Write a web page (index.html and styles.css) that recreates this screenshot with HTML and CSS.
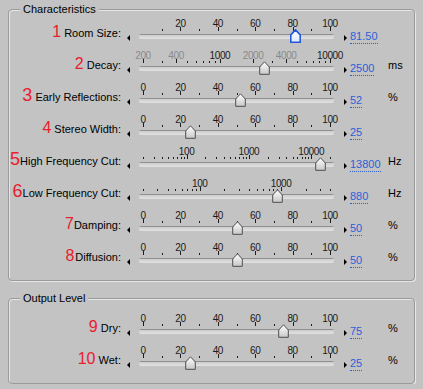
FILE: index.html
```html
<!DOCTYPE html>
<html lang="en">
<head>
    <meta charset="UTF-8">
    <title>Reverb</title>
    <link rel="stylesheet" href="styles.css">
</head>
<body>
    <!-- shared gradients for the slider thumbs -->
    <svg class="defs" width="0" height="0">
        <defs>
            <linearGradient id="thumbFill" x1="0" y1="0" x2="0" y2="1">
                <stop offset="0" stop-color="#ffffff"/>
                <stop offset="1" stop-color="#c8c8c8"/>
            </linearGradient>
            <linearGradient id="thumbFocus" x1="0" y1="0" x2="0" y2="1">
                <stop offset="0" stop-color="#ffffff"/>
                <stop offset="1" stop-color="#dfe8ff"/>
            </linearGradient>
        </defs>
    </svg>

    <div class="group first">
        <div class="group-title">Characteristics</div>

        <div class="row">
            <div class="label"><span class="num">1</span> Room Size:</div>
            <div class="arrow-l"></div>
            <div class="scale focus" data-type="room" data-value="81.5"></div>
            <div class="arrow-r"></div>
            <div class="value"><span>81.50</span></div>
            <div class="unit"></div>
        </div>
        <div class="row">
            <div class="label"><span class="num">2</span> Decay:</div>
            <div class="arrow-l"></div>
            <div class="scale" data-type="decay" data-value="2500"></div>
            <div class="arrow-r"></div>
            <div class="value"><span>2500</span></div>
            <div class="unit">ms</div>
        </div>
        <div class="row">
            <div class="label"><span class="num big">3</span> Early Reflections:</div>
            <div class="arrow-l"></div>
            <div class="scale" data-type="lin" data-value="52"></div>
            <div class="arrow-r"></div>
            <div class="value"><span>52</span></div>
            <div class="unit">%</div>
        </div>
        <div class="row">
            <div class="label"><span class="num">4</span> Stereo Width:</div>
            <div class="arrow-l"></div>
            <div class="scale" data-type="lin" data-value="25"></div>
            <div class="arrow-r"></div>
            <div class="value"><span>25</span></div>
            <div class="unit"></div>
        </div>
        <div class="row">
            <div class="label"><span class="num big">5</span>High Frequency Cut:</div>
            <div class="arrow-l"></div>
            <div class="scale" data-type="hfc" data-value="13800"></div>
            <div class="arrow-r"></div>
            <div class="value"><span>13800</span></div>
            <div class="unit">Hz</div>
        </div>
        <div class="row">
            <div class="label"><span class="num big">6</span>Low Frequency Cut:</div>
            <div class="arrow-l"></div>
            <div class="scale" data-type="lfc" data-value="880"></div>
            <div class="arrow-r"></div>
            <div class="value"><span>880</span></div>
            <div class="unit">Hz</div>
        </div>
        <div class="row">
            <div class="label"><span class="num">7</span>Damping:</div>
            <div class="arrow-l"></div>
            <div class="scale" data-type="lin" data-value="50"></div>
            <div class="arrow-r"></div>
            <div class="value"><span>50</span></div>
            <div class="unit">%</div>
        </div>
        <div class="row">
            <div class="label"><span class="num tight">8</span>Diffusion:</div>
            <div class="arrow-l"></div>
            <div class="scale" data-type="lin" data-value="50"></div>
            <div class="arrow-r"></div>
            <div class="value"><span>50</span></div>
            <div class="unit">%</div>
        </div>
    </div>

    <div class="group second">
        <div class="group-title">Output Level</div>

        <div class="row">
            <div class="label"><span class="num">9</span> Dry:</div>
            <div class="arrow-l"></div>
            <div class="scale" data-type="lin" data-value="75"></div>
            <div class="arrow-r"></div>
            <div class="value"><span>75</span></div>
            <div class="unit">%</div>
        </div>
        <div class="row">
            <div class="label"><span class="num">10</span> Wet:</div>
            <div class="arrow-l"></div>
            <div class="scale" data-type="lin" data-value="25"></div>
            <div class="arrow-r"></div>
            <div class="value"><span>25</span></div>
            <div class="unit">%</div>
        </div>
    </div>

    <script>
        // track runs 139..334, usable range starts 4px in and is 187px long
        const trackStart = 4;
        const trackLength = 187;

        const logScale = (min, max) => (v) => Math.log(v / min) / Math.log(max / min);

        // every 1..9 step of each decade between min and max
        const logTicks = (min, max, labels, dim = []) => {
            const ticks = [];
            for (let d = 1; d <= max; d *= 10) {
                for (let m = 1; m <= 9; m++) {
                    const v = m * d;
                    if (v < min || v > max) continue;
                    const major = labels.includes(v);
                    ticks.push({ v, major, text: major ? String(v) : '', dim: dim.includes(v) });
                }
            }
            return ticks;
        };

        const linTicks = (from) => {
            const ticks = [];
            for (let v = from; v <= 100; v += 10) {
                const major = v % 20 === 0;
                ticks.push({ v, major, text: major ? String(v) : '' });
            }
            return ticks;
        };

        const scales = {
            lin:   { f: (v) => v / 100, ticks: linTicks(0) },
            room:  { f: (v) => v / 100, ticks: linTicks(10) },
            decay: { f: logScale(200, 10000), ticks: logTicks(200, 10000, [200, 400, 1000, 2000, 4000, 10000], [200, 400, 2000, 4000]) },
            hfc:   { f: logScale(20, 20000), ticks: logTicks(20, 20000, [100, 1000, 10000]) },
            lfc:   { f: logScale(20, 4000), ticks: logTicks(20, 4000, [100, 1000]) }
        };

        const toPx = (f) => (trackStart + f * trackLength).toFixed(1);

        document.querySelectorAll('.scale').forEach((el) => {
            const scale = scales[el.dataset.type];
            let html = '';
            scale.ticks.forEach((t) => {
                const x = toPx(scale.f(t.v));
                html += `<i class="tick ${t.major ? 'major' : 'minor'}" style="left:${x}px"></i>`;
                if (t.text) {
                    html += `<b class="tick-label${t.dim ? ' dim' : ''}" style="left:${x}px">${t.text}</b>`;
                }
            });
            html += '<div class="track"></div>';
            const x = toPx(scale.f(Number(el.dataset.value)));
            const fill = el.classList.contains('focus') ? 'thumbFocus' : 'thumbFill';
            html += `<svg class="thumb" style="left:${x}px" width="11" height="14" viewBox="0 0 11 14">
                        <path d="M5.5 0.8 L10.3 6 V13.3 H0.7 V6 Z" fill="url(#${fill})"/>
                     </svg>`;
            el.innerHTML = html;
        });
    </script>
</body>
</html>
```

FILE: styles.css
```css
body {
    margin: 0;
    padding: 9px 0 0 8px;
    background: #c3c3c3;
    font-family: "Liberation Sans", Arial, sans-serif;
    font-size: 11px;
    color: #000;
}
.defs {
    position: absolute;
    width: 0;
    height: 0;
}
.group {
    position: relative;
    width: 407px;
    box-sizing: border-box;
    border: 1px solid #9a9a9a;
    border-radius: 4px;
    box-shadow: 1px 1px 0 #e6e6e6, inset 1px 1px 0 #e6e6e6;
}
.group.first {
    padding: 8px 0 6px;
}
.group.second {
    margin-top: 17px;
    padding: 14px 0 6px;
}
.group-title {
    position: absolute;
    top: -7px;
    left: 11px;
    padding: 0 3px;
    line-height: 13px;
    background: #c3c3c3;
}
.row {
    display: flex;
    height: 32px;
}
.label {
    width: 112px;
    padding: 9px 1px 0 0;
    line-height: 13px;
    text-align: right;
    white-space: nowrap;
}
.num {
    color: #e8202c;
    font-size: 16px;
    line-height: 0;
}
.num.big {
    font-size: 18px;
}
.num.tight {
    margin-right: 1px;
}
.arrow-l {
    width: 17px;
    position: relative;
}
.arrow-l::before {
    content: "";
    position: absolute;
    left: 5px;
    top: 17px;
    border-right: 3px solid #000;
    border-top: 3px solid transparent;
    border-bottom: 3px solid transparent;
}
.scale {
    position: relative;
    width: 195px;
}
.tick {
    position: absolute;
    width: 1px;
    background: #1c1c1c;
}
.tick.major {
    top: 9px;
    height: 4px;
}
.tick.minor {
    top: 11px;
    height: 2px;
}
.tick-label {
    position: absolute;
    top: 1px;
    transform: translateX(-50%);
    font-weight: normal;
    font-size: 10px;
    line-height: 10px;
    letter-spacing: -0.4px;
    color: #1a1a1a;
}
.tick-label.dim {
    color: #8a8a8a;
}
.track {
    position: absolute;
    left: 0;
    right: 0;
    top: 16px;
    height: 5px;
    border-radius: 2px;
    background: linear-gradient(#8f8f8f 0, #8f8f8f 1px, #cdcdcd 1px, #e2e2e2);
}
.thumb {
    position: absolute;
    top: 11px;
    margin-left: -5px;
}
.thumb path {
    stroke: #4e4e4e;
    stroke-width: 1;
    stroke-linejoin: round;
}
.focus .thumb path {
    stroke: #2458d6;
    stroke-width: 1.7;
}
.arrow-r {
    width: 15px;
    position: relative;
}
.arrow-r::before {
    content: "";
    position: absolute;
    left: 10px;
    top: 17px;
    border-left: 3px solid #000;
    border-top: 3px solid transparent;
    border-bottom: 3px solid transparent;
}
.value {
    width: 38px;
    padding: 12px 0 0 1px;
}
.value span {
    display: inline-block;
    line-height: 13px;
    color: #2c5fd8;
    border-bottom: 1px dotted #2c5fd8;
}
.unit {
    padding-top: 9px;
    line-height: 13px;
}
```
